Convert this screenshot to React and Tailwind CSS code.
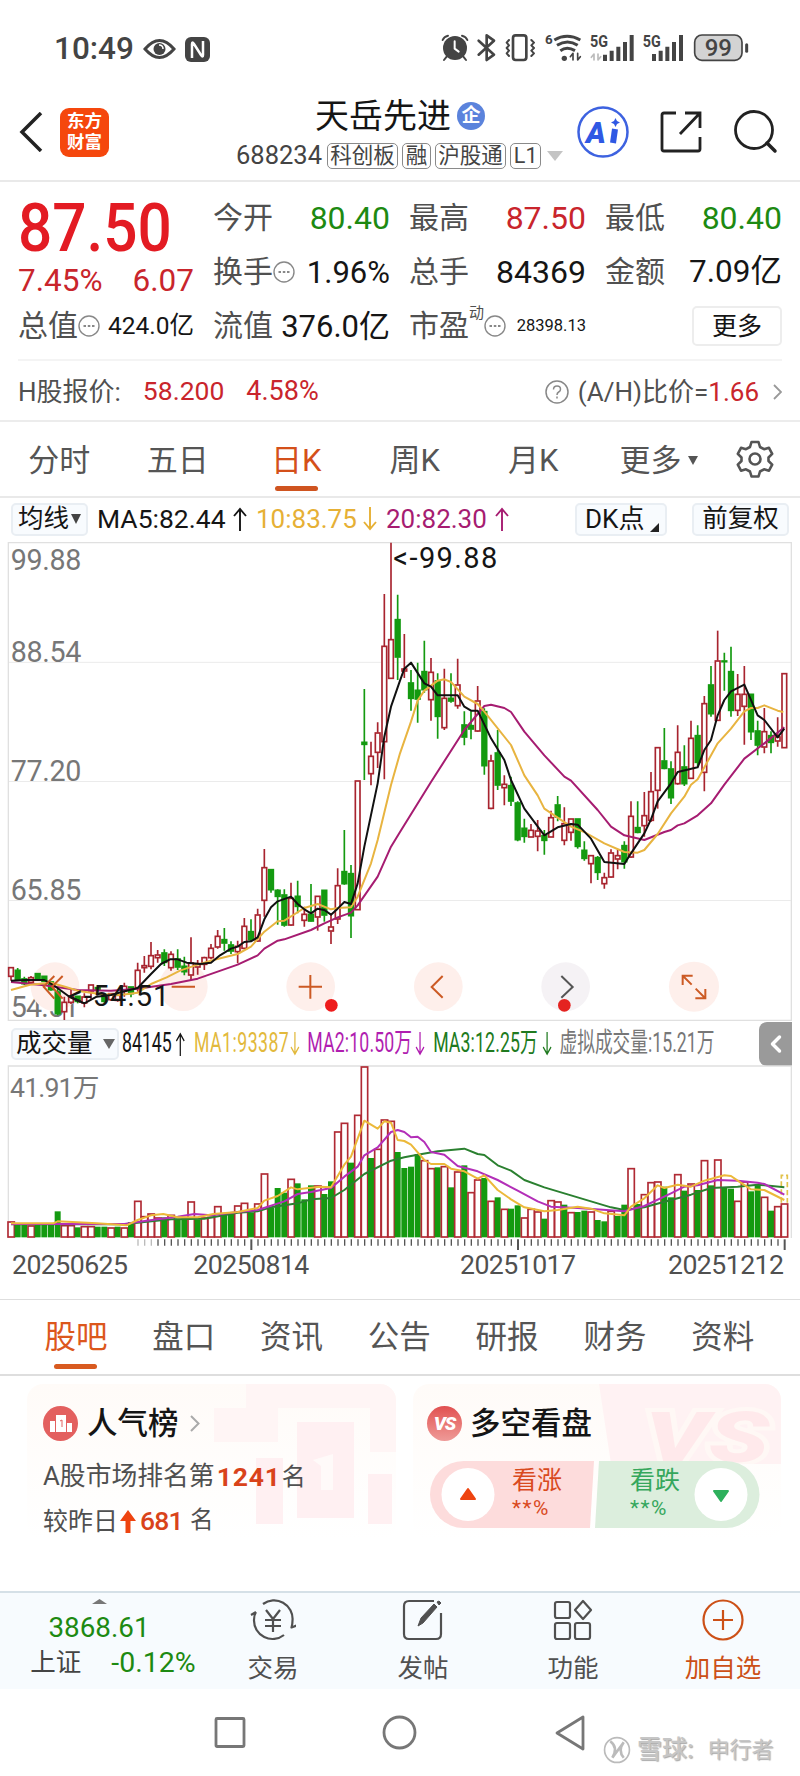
import { ChevronLeft } from 'lucide-react'

// [top wick, body top, body bottom, bottom wick, 1 = up / 0 = down]
const VELAS = [
  [1312, 1312, 1340, 1352, 1], [1314, 1320, 1350, 1352, 0], [1340, 1346, 1362, 1365, 0], [1338, 1342, 1358, 1360, 1],
  [1330, 1330, 1346, 1352, 0], [1338, 1338, 1355, 1355, 0], [1355, 1355, 1380, 1382, 0], [1375, 1385, 1452, 1456, 0],
  [1400, 1416, 1446, 1470, 1], [1380, 1398, 1418, 1422, 1], [1398, 1398, 1415, 1420, 0], [1390, 1400, 1420, 1432, 1],
  [1364, 1364, 1384, 1410, 1], [1365, 1372, 1380, 1390, 0], [1395, 1395, 1415, 1418, 0], [1390, 1390, 1410, 1412, 1],
  [1394, 1395, 1412, 1415, 1], [1358, 1368, 1385, 1400, 1], [1370, 1370, 1392, 1402, 0], [1298, 1320, 1374, 1385, 1],
  [1278, 1306, 1314, 1328, 1], [1236, 1276, 1310, 1318, 1], [1260, 1274, 1284, 1298, 1], [1258, 1268, 1298, 1308, 0],
  [1264, 1272, 1314, 1322, 1], [1258, 1286, 1312, 1320, 0], [1280, 1308, 1326, 1336, 0], [1222, 1298, 1336, 1350, 1],
  [1290, 1300, 1312, 1334, 1], [1280, 1282, 1304, 1320, 1], [1242, 1254, 1284, 1288, 1], [1200, 1218, 1252, 1256, 1],
  [1194, 1228, 1240, 1262, 0], [1234, 1244, 1264, 1272, 0], [1232, 1248, 1266, 1300, 1], [1164, 1188, 1256, 1258, 1],
  [1168, 1204, 1230, 1236, 0], [1136, 1154, 1234, 1236, 1], [957, 1012, 1112, 1160, 1], [1018, 1018, 1080, 1088, 0],
  [1078, 1080, 1100, 1184, 0], [1078, 1094, 1186, 1190, 0], [1058, 1104, 1186, 1188, 1], [1052, 1098, 1130, 1150, 0],
  [1130, 1152, 1172, 1190, 1], [1062, 1152, 1174, 1175, 0], [1098, 1098, 1162, 1202, 1], [1080, 1080, 1156, 1175, 0],
  [1150, 1190, 1204, 1242, 1], [1015, 1066, 1168, 1182, 1], [900, 1024, 1062, 1064, 0], [1005, 1030, 1158, 1224, 0],
  [752, 752, 1140, 1140, 1], [477, 636, 644, 750, 0], [635, 678, 732, 766, 1], [577, 608, 668, 714, 1],
  [192, 348, 636, 748, 1], [38, 328, 446, 446, 1], [194, 268, 382, 450, 0], [312, 416, 424, 444, 1],
  [420, 458, 506, 542, 0], [398, 480, 508, 578, 0], [332, 424, 480, 488, 0], [384, 426, 510, 572, 1],
  [430, 452, 560, 626, 0], [416, 504, 594, 600, 1], [430, 504, 514, 518, 0], [386, 464, 528, 536, 1],
  [544, 584, 622, 646, 0], [544, 586, 598, 628, 0], [468, 512, 604, 606, 1], [535, 544, 708, 734, 0],
  [674, 692, 836, 838, 1], [600, 668, 766, 780, 0], [736, 762, 774, 826, 1], [740, 766, 814, 828, 0],
  [814, 818, 930, 934, 0], [866, 894, 920, 938, 0], [882, 900, 922, 922, 1], [870, 902, 920, 964, 1],
  [900, 916, 932, 974, 0], [842, 862, 922, 922, 1], [798, 824, 862, 874, 0], [832, 880, 932, 946, 1],
  [866, 866, 908, 932, 1], [866, 866, 950, 956, 0], [934, 960, 986, 992, 0], [976, 976, 1002, 1060, 1],
  [978, 982, 1028, 1050, 0], [1028, 1042, 1062, 1076, 1], [958, 968, 1042, 1044, 1], [958, 976, 988, 1018, 1],
  [934, 946, 996, 1016, 0], [814, 858, 982, 984, 1], [814, 892, 908, 910, 0], [786, 856, 888, 920, 1],
  [726, 784, 872, 876, 1], [652, 652, 782, 836, 1], [594, 692, 716, 718, 0], [694, 716, 804, 822, 0],
  [586, 666, 762, 764, 1], [646, 710, 762, 768, 0], [572, 624, 746, 746, 1], [586, 616, 698, 708, 0],
  [498, 520, 728, 784, 1], [408, 464, 552, 560, 0], [302, 392, 572, 572, 1], [368, 392, 396, 482, 0],
  [350, 424, 542, 560, 0], [432, 492, 542, 558, 1], [408, 492, 530, 644, 1], [492, 492, 606, 630, 0],
  [572, 602, 646, 676, 0], [534, 604, 652, 670, 1], [604, 616, 638, 670, 0], [562, 620, 634, 650, 1],
  [430, 430, 654, 654, 1],
]

// bar tops, negative = down day
const VOLUMEN = [
  634, -640, -642, 646, -640, -642, -640, -604, 645, 645, -652, 648, 648, -650, -650, 652, -650, 652, -636, 572,
  618, 610, 622, -622, 614, -628, -625, 574, -628, 622, 620, 588, -612, -612, 586, 578, -608, 580, 490, -594,
  -534, -548, 506, -520, -568, -526, 526, -552, -514, 364, 338, -458, 314, 169, -444, 416, 328, 332, -426, -474,
  -470, -432, 450, 474, -472, 468, -532, 484, -466, 546, 508, -504, 572, -562, 596, -596, -586, 622, 596, 604,
  -626, 570, 574, -584, 606, -606, -602, 604, -630, -634, 602, -618, -584, 474, -582, 552, 516, 514, -530, -562,
  492, -542, 520, -540, 450, -526, 448, -532, -536, 572, 514, -544, -524, 560, -602, 588, 580,
]

const MA5 = '33,1352 80,1350 133,1350 160,1365 205,1398 253,1420 290,1400 333,1395 373,1384 413,1374 453,1332 483,1302 510,1288 533,1288 560,1298 600,1302 633,1298 660,1276 693,1256 713,1250 733,1236 753,1234 773,1222 793,1168 813,1132 833,1114 873,1100 893,1122 913,1138 933,1150 953,1136 973,1140 993,1154 1013,1136 1033,1116 1053,1122 1073,1060 1093,950 1133,760 1153,620 1173,530 1200,452 1213,416 1233,398 1273,460 1293,470 1313,496 1373,496 1393,530 1413,542 1433,542 1473,625 1513,690 1533,750 1573,836 1633,916 1673,892 1713,882 1733,884 1773,926 1813,996 1873,1002 1893,970 1933,910 1953,868 1973,814 2013,760 2033,726 2093,712 2113,660 2133,630 2153,556 2173,510 2193,484 2233,464 2273,556 2293,570 2333,622 2353,596'
const MA10 = '33,1380 90,1364 153,1358 200,1372 240,1384 300,1392 360,1395 413,1388 453,1362 500,1342 540,1322 593,1304 640,1290 713,1272 753,1250 793,1205 833,1174 853,1172 913,1134 953,1122 993,1138 1013,1134 1053,1132 1073,1100 1113,1000 1133,930 1173,765 1200,670 1233,575 1253,512 1273,482 1313,452 1333,448 1353,456 1393,500 1433,522 1453,545 1533,645 1573,736 1613,796 1633,836 1713,890 1753,906 1813,940 1873,966 1913,968 1933,960 1973,912 2013,850 2053,800 2073,764 2093,748 2153,640 2193,596 2233,544 2253,534 2273,534 2293,526 2333,542 2350,546'
const MA20 = '33,1356 133,1366 233,1380 333,1382 413,1376 513,1362 593,1346 713,1304 773,1276 793,1256 833,1232 853,1228 933,1200 973,1180 1013,1162 1053,1148 1073,1126 1133,1040 1173,950 1200,906 1293,756 1393,600 1453,528 1473,524 1513,534 1533,546 1573,605 1633,676 1693,740 1713,752 1793,840 1833,890 1873,916 1933,930 1993,906 2013,900 2033,886 2053,880 2093,856 2133,820 2173,764 2233,686 2293,640 2353,592'
const VMA1 = '33,640 160,640 173,634 290,640 380,646 413,630 453,616 490,612 533,622 593,622 640,612 713,606 773,594 793,572 833,558 873,532 893,538 960,530 993,532 1033,464 1053,440 1093,332 1133,356 1153,334 1173,338 1193,390 1213,393 1233,404 1273,450 1293,462 1333,462 1353,476 1393,484 1433,506 1453,496 1493,540 1533,568 1573,592 1633,604 1673,600 1733,590 1773,596 1813,610 1873,616 1893,590 1933,565 1973,526 1993,534 2033,524 2073,530 2113,512 2173,496 2193,498 2213,512 2253,538 2293,540 2353,570'
const VMA2 = '33,642 373,642 413,636 473,628 533,620 583,612 633,616 713,606 773,600 853,574 893,552 933,546 993,534 1033,500 1073,470 1093,436 1133,412 1173,366 1193,360 1213,366 1233,382 1253,380 1273,396 1293,426 1333,434 1373,468 1433,484 1493,510 1553,542 1613,574 1653,590 1733,594 1873,604 1933,588 2013,550 2053,530 2093,526 2153,510 2213,512 2273,518 2293,522 2353,554'
const VMA3 = '33,643 373,643 433,636 513,628 613,626 713,608 773,604 813,592 893,580 933,568 993,564 1033,540 1093,492 1173,452 1213,442 1253,434 1313,424 1393,416 1433,432 1453,435 1493,466 1533,482 1573,510 1633,532 1713,556 1793,580 1833,592 1873,600 1933,592 2013,570 2073,554 2133,534 2213,530 2273,524 2353,532'

const PERIODOS = ['分时', '五日', '日K', '周K', '月K']
const SECCIONES = ['股吧', '盘口', '资讯', '公告', '研报', '财务', '资料']

export default function App() {
  return (
    <div className="flex h-[1776px] w-[800px] flex-col overflow-hidden whitespace-nowrap bg-white font-['Roboto','Noto_Sans_CJK_SC',sans-serif] leading-none text-[#151515]">
      <BarraEstado />
      <Cabecera />
      <Cotizacion />
      <Periodos />
      <Medias />
      <GraficaPrecio />
      <CabeceraVolumen />
      <GraficaVolumen />
      <Secciones />
      <Tarjetas />
      <BarraInferior />
      <Navegacion />
    </div>
  )
}

function BarraEstado() {
  return (
    <div className="flex h-[84px] shrink-0 items-center pl-[54px] pt-[14px] text-[#444]">
      <span className="w-[89px] text-[31.5px] font-medium">10:49</span>
      <svg className="h-6 w-[33px]" viewBox="0 0 33 24" fill="none" stroke="currentColor" strokeWidth="3">
        <path d="M2 12Q16.500-5 31 12Q16.500 29 2 12Z" />
        <circle cx="16.500" cy="12" r="6" fill="currentColor" stroke="none" />
        <path d="M16 8q4 0 4 4" stroke="#fff" strokeWidth="1.500" />
      </svg>
      <svg className="ml-[9px] h-[25px] w-[25px]" viewBox="0 0 25 25">
        <rect width="25" height="25" rx="6" fill="currentColor" />
        <path d="M7 21V7q0-3 2 0L16 18q2 3 2 0V4" fill="none" stroke="#fff" strokeWidth="2.500" />
      </svg>
      <svg className="ml-[220px] h-[50px] w-[330px] shrink-0" viewBox="0 0 990 150" fill="none" stroke="currentColor" strokeWidth="8" strokeLinecap="round" strokeLinejoin="round">
        <circle cx="75" cy="72" r="36" fill="currentColor" stroke="none" />
        <path d="M38 48q4-10 16-13M112 48q-4-10-16-13M50 98l-8 10M100 98l8 10" strokeWidth="6" />
        <path d="M74 52v22l12 9" stroke="#fff" strokeWidth="6" />
        <path d="M146 50l46 42-22 16V34l22 16-46 42" />
        <rect x="249" y="34" width="40" height="74" rx="8" />
        <path d="M237 48l-7 8 7 8-7 8 7 8-7 8 7 8M304 48l8 8-8 8 8 8-8 8 8 8-8 8" strokeWidth="6" />
        <path d="M373 48q38-22 78 0M381 64q32-20 62 0M391 80q20-14 44 0" strokeWidth="9" strokeLinecap="butt" />
        <circle cx="403" cy="103" r="8" fill="currentColor" stroke="none" />
        <path d="M429 108V88l-8 10M443 88v20l8-10" strokeWidth="5" />
        <path d="M492 108V90l-8 10M504 90v18l8-10" stroke="#bbb" strokeWidth="5" />
        <g strokeWidth="12" strokeLinecap="butt">
          <path d="M525 111V92M545 111V80M565 111V68M585 111V54M605 111V33" />
          <path d="M672 111V90M692 111V80M712 111V68M732 111V54M753 111V33" />
        </g>
        <rect x="794" y="33" width="142" height="76" rx="22" fill="#d3d3d3" strokeWidth="5" />
        <path d="M950 62v20" strokeWidth="9" />
        <g fill="currentColor" stroke="none" fontWeight="700">
          <text x="345" y="60" fontSize="40">6</text>
          <text x="480" y="70" fontSize="48" textLength="54" lengthAdjust="spacingAndGlyphs">5G</text>
          <text x="638" y="70" fontSize="48" textLength="54" lengthAdjust="spacingAndGlyphs">5G</text>
          <text x="824" y="97" fontSize="72" fontWeight="500" textLength="82">99</text>
        </g>
      </svg>
    </div>
  )
}

function Etiqueta({ children }) {
  return (
    <span className="flex h-[26px] items-center rounded-[5px] border border-[#8a8a8a] px-[2.500px] text-[21.5px]">{children}</span>
  )
}

function Cabecera() {
  return (
    <div className="flex h-[98px] shrink-0 items-center border-b-2 border-[#e9e9e9] pl-[19px]">
      <svg className="h-[40px] w-[24px]" viewBox="0 0 24 40" fill="none" stroke="#222" strokeWidth="3.500">
        <path d="M22 1L3 20l19 19" />
      </svg>
      <div className="ml-[17px] flex h-[49px] w-[49px] flex-col items-center justify-center rounded-[9px] bg-[#f5470d] text-[17.500px] font-bold leading-[21px] text-white">
        <span className="h-[21px] overflow-hidden">东方</span>
        <span className="h-[21px] overflow-hidden">财富</span>
      </div>
      <div className="ml-[127px] flex w-[327px] flex-col pt-[3px]">
        <div className="flex items-center pl-[79px]">
          <span className="text-[34px] leading-[44px]">天岳先进</span>
          <span className="ml-[6px] flex h-[28px] w-[28px] items-center justify-center rounded-full bg-[#5b83dc] text-[19px] font-bold text-white">企</span>
        </div>
        <div className="flex h-[36px] items-center gap-[4px] text-[#444]">
          <span className="w-[87px] text-[25.5px]">688234</span>
          <Etiqueta>科创板</Etiqueta>
          <Etiqueta>融</Etiqueta>
          <Etiqueta>沪股通</Etiqueta>
          <Etiqueta>L1</Etiqueta>
          <svg className="ml-[2px] h-[10px] w-[16px]" viewBox="0 0 16 10"><path d="M0 0h16L8 10z" fill="#c4c4c4" /></svg>
        </div>
      </div>
      <svg className="ml-[14px] h-[52px] w-[52px]" viewBox="0 0 52 52" fill="none" stroke="#3d62e0">
        <circle cx="26" cy="26" r="24.500" strokeWidth="2.500" />
        <text x="9" y="37" fontSize="30" fontWeight="900" fontStyle="italic" fill="#2f58e4" stroke="none">A</text>
        <path d="M38 23l-2 14" stroke="#2f58e4" strokeWidth="6" />
        <path d="M38.500 12l1.500 3 3 1.500-3 1.500-1.500 3-1.500-3-3-1.500 3-1.500z" fill="#2f58e4" stroke="none" />
      </svg>
      <svg className="ml-[31px] h-[42px] w-[42px]" viewBox="0 0 42 42" fill="none" stroke="#222" strokeWidth="2.800">
        <path d="M16 2H4q-2 0-2 2v34q0 2 2 2h34q2 0 2-2V26M25 2h15v15M40 2L20 23" />
      </svg>
      <svg className="ml-[32px] h-[44px] w-[44px]" viewBox="0 0 44 44" fill="none" stroke="#222" strokeWidth="2.800" strokeLinecap="round">
        <circle cx="20" cy="20" r="18.500" />
        <path d="M33 33l8 8" strokeWidth="3.500" />
      </svg>
    </div>
  )
}

function Puntos() {
  return (
    <svg className="h-[22px] w-[22px] shrink-0" viewBox="0 0 22 22" fill="none" stroke="#888" strokeWidth="1.400">
      <circle cx="11" cy="11" r="10" />
      <path d="M5.500 11h2.500M9.800 11h2.500M14 11h2.500" strokeWidth="2.200" />
    </svg>
  )
}

function Dato({ label, icono, value, clase = 'text-[32px]' }) {
  return (
    <div className="flex h-[54px] items-center">
      <span className="text-[30px] text-[#505050]">{label}</span>
      {icono && <Puntos />}
      <span className={`ml-auto ${clase}`}>{value}</span>
    </div>
  )
}

function Cotizacion() {
  return (
    <div className="h-[240px] shrink-0 border-b-2 border-[#ececec] px-[18px] pt-[9px]">
      <div className="grid h-[170px] grid-cols-4 gap-x-[20px] border-b-2 border-[#f4f4f4]">
        <div>
          <div className="h-[72px] origin-left scale-x-[0.9] pt-[2px] text-[67px] font-medium leading-[70px] text-[#e31b23]">87.50</div>
          <div className="flex h-[36px] items-center justify-between text-[31.500px] text-[#c9252c]">
            <span>7.45%</span>
            <span>6.07</span>
          </div>
          <Dato label="总值" icono value="424.0亿" clase="text-[24.5px]" />
        </div>
        <div className="-ml-px">
          <Dato label="今开" value="80.40" clase="text-[32px]  text-[#1d8a12]" />
          <Dato label="换手" icono value="1.96%" clase="text-[31px]" />
          <Dato label="流值" value="376.0亿" clase="text-[31px]" />
        </div>
        <div className="-ml-px">
          <Dato label="最高" value="87.50" clase="text-[32px] text-[#c9252c]" />
          <Dato label="总手" value="84369" clase="text-[32px]" />
          <div className="flex h-[54px] items-center">
            <span className="text-[30px] text-[#505050]">市盈</span>
            <span className="-mt-[26px] text-[15px] text-[#505050]">动</span>
            <Puntos />
            <span className="ml-auto text-[16.500px]">28398.13</span>
          </div>
        </div>
        <div className="-ml-px">
          <Dato label="最低" value="80.40" clase="text-[32px] text-[#1d8a12]" />
          <Dato label="金额" value="7.09亿" clase="text-[31.5px]" />
          <div className="flex h-[54px] items-center justify-end">
            <span className="flex h-[40px] w-[90px] items-center justify-center rounded-[5px] border-2 border-[#ededed] text-[25px]">更多</span>
          </div>
        </div>
      </div>
      <div className="flex h-[61px] items-center">
        <span className="text-[26px] text-[#505050]">H股报价:</span>
        <span className="ml-[22px] text-[26.500px] text-[#c9252c]">58.200</span>
        <span className="ml-[22px] text-[27px] text-[#c9252c]">4.58%</span>
        <svg className="ml-auto h-[24px] w-[24px]" viewBox="0 0 24 24" fill="none" stroke="#888" strokeWidth="1.500">
          <circle cx="12" cy="12" r="11" />
          <path d="M8.500 9.500q0-3.500 3.500-3.500t3.500 3.200q0 1.800-1.800 2.800t-1.700 3M12 16.500v2" />
        </svg>
        <span className="ml-[9px] text-[26px] text-[#505050]">(A/H)比价=</span>
        <span className="text-[26px] text-[#c9252c]">1.66</span>
        <svg className="ml-[14px] h-[16px] w-[9px]" viewBox="0 0 9 16" fill="none" stroke="#999" strokeWidth="1.800"><path d="M1 1l7 7-7 7" /></svg>
      </div>
    </div>
  )
}

function Periodos() {
  return (
    <div className="flex h-[76px] shrink-0 border-b-2 border-[#e9e9e9] text-[31px] text-[#555]">
      {PERIODOS.map((p) => (
        <div key={p} className={`relative flex w-[118.500px] items-center justify-center pt-[2px] ${p === '日K' ? 'text-[#d4501a]' : ''}`}>
          {p}
          {p === '日K' && <i className="absolute bottom-[5px] h-[5px] w-[43px] rounded-full bg-[#cf5420]" />}
        </div>
      ))}
      <div className="flex items-center pl-[27px] pt-[2px]">
        更多
        <svg className="ml-[6px] h-[9px] w-[10px]" viewBox="0 0 10 9"><path d="M0 0h10L5 9z" fill="#555" /></svg>
      </div>
      <div className="flex items-center pl-[38px]">
        <svg className="h-[38px] w-[38px]" viewBox="0 0 38 38" fill="none" stroke="#555" strokeWidth="2.600" strokeLinejoin="round">
          <path d="M15.500 2h7l1.500 5 4 2.200 5-1.400 3.200 6-3.700 3.700v3.500l3.700 3.700-3.200 6-5-1.400-4 2.200-1.500 5h-7L14 31.500l-4-2.200-5 1.400-3.200-6L5.500 21v-3.500l-3.700-3.700 3.200-6 5 1.400L14 7z" />
          <circle cx="19" cy="19" r="5.500" />
        </svg>
      </div>
    </div>
  )
}

function Flecha({ abajo }) {
  return (
    <svg className={`h-[24px] w-[16px] shrink-0 ${abajo ? 'rotate-180' : ''}`} viewBox="0 0 16 24" fill="none" stroke="currentColor" strokeWidth="1.900">
      <path d="M8 24V2M2 9l6-7 6 7" />
    </svg>
  )
}

function Boton({ className, children }) {
  return <div className={`flex items-center rounded-[5px] border-2 border-[#e9eef3] bg-[#f8fbfe] ${className}`}>{children}</div>
}

function Medias() {
  return (
    <div className="flex h-[44px] shrink-0 items-center pb-[2px] pl-[11px] text-[26px]">
      <Boton className="h-[33px] w-[77px] pl-[5px]">
        <span className="text-[25.5px]">均线</span>
        <svg className="ml-[2px] h-[10px] w-[10px]" viewBox="0 0 10 10"><path d="M0 0h10L5 10z" fill="#444" /></svg>
      </Boton>
      <span className="ml-[9px] w-[135px] text-[26.500px]">MA5:82.44</span>
      <Flecha />
      <span className="ml-[8px] flex w-[106px] text-[#e6b035]">10:83.75</span>
      <span className="text-[#e6b035]"><Flecha abajo /></span>
      <span className="ml-[8px] w-[108px] text-[#a61c71]">20:82.30</span>
      <span className="text-[#a61c71]"><Flecha /></span>
      <Boton className="ml-[65px] h-[33px] w-[92px] pl-[8px]">
        <span className="text-[26px]">DK点</span>
        <svg className="ml-[6px] mt-[16px] h-[9px] w-[9px]" viewBox="0 0 9 9"><path d="M9 0v9H0z" fill="#222" /></svg>
      </Boton>
      <Boton className="ml-[25px] h-[33px] w-[97px] justify-center">
        <span className="text-[25.500px]">前复权</span>
      </Boton>
    </div>
  )
}

function GraficaPrecio() {
  return (
    <svg className="h-[480px] w-[800px] shrink-0 overflow-visible" viewBox="0 36 2400 1440" fill="none">
      <path d="M25 397H2374M25 754.500H2374M25 1111.500H2374" stroke="#ebebeb" strokeWidth="3" />
      <path d="M25 1471V38H2374V1471Z" stroke="#e0e0e0" strokeWidth="4" />
      <g fill="#777" fontSize="86">
        <text x="32" y="119" textLength="212">99.88</text>
        <text x="32" y="395" textLength="212">88.54</text>
        <text x="32" y="754" textLength="212">77.20</text>
        <text x="32" y="1111" textLength="212">65.85</text>
        <text x="32" y="1461" textLength="206">54.51</text>
      </g>
      <g fill="#feefeb">
        <circle cx="165" cy="1370" r="73" />
        <circle cx="550" cy="1370" r="73" />
        <circle cx="932" cy="1370" r="73" />
        <circle cx="1315" cy="1370" r="73" />
        <circle cx="1697" cy="1370" r="73" fill="#f5f2f5" />
        <circle cx="2082" cy="1370" r="75" />
      </g>
      {VELAS.map(([hi, top, bot, lo, up], i) => {
        const x = 33 + i * 20
        const color = up ? '#a8242f' : '#149a10'
        return (
          <g key={i} stroke={color} strokeWidth="5">
            <path d={`M${x} ${hi}V${top}M${x} ${bot}V${lo}`} />
            <rect x={x - 7} y={top + 1} width="14" height={Math.max(bot - top - 2, 2)} fill={up ? '#fff' : color} />
          </g>
        )
      })}
      <g strokeWidth="6" strokeLinejoin="round">
        <polyline points={MA20} stroke="#a61c71" />
        <polyline points={MA10} stroke="#e8b440" />
        <polyline points={MA5} stroke="#111" />
      </g>
      <g fill="#151515" fontSize="87">
        <text x="1180" y="115" textLength="312">&lt;-99.88</text>
        <text x="204" y="1429" textLength="304">&lt;-54.51</text>
      </g>
      <g stroke="#cc5a24" strokeWidth="6">
        <path d="M163 1338l-32 32 32 36M188 1338l-32 32 32 36M515 1370h70M896 1370h70M931 1335v71" />
        <path d="M1328 1338l-33 33 33 32" />
        <path d="M1684 1338l34 33-34 32" stroke="#555" />
        <path d="M2078 1337h-30v28M2049 1338l26 26M2086 1405h30v-28M2115 1404l-28-28" />
      </g>
      <circle cx="994" cy="1426" r="19" fill="#ee1c1c" />
      <circle cx="1693" cy="1426" r="19" fill="#e42320" />
    </svg>
  )
}

function CabeceraVolumen() {
  return (
    <div className="flex h-[43px] shrink-0 items-center pl-[11px]">
      <Boton className="h-[32px] w-[108px] shrink-0 pl-[3px]">
        <span className="text-[25.500px]">成交量</span>
        <svg className="ml-[10px] h-[10px] w-[12px]" viewBox="0 0 12 10"><path d="M0 0h12L6 10z" fill="#666" /></svg>
      </Boton>
      {/* condensed figures so the whole line fits */}
      <div className="ml-[3px] w-[637px] shrink-0">
        <div className="flex w-[940px] origin-left scale-x-[0.655] items-center text-[27px]">
          <span className="w-[81px]">84145</span>
          <Flecha />
          <span className="ml-[13px] flex w-[162px] items-center justify-between tracking-[0.7px] text-[#e2b93c]">MA1:93387<Flecha abajo /></span>
          <span className="ml-[11px] flex w-[180px] items-center justify-between tracking-[0.2px] text-[#b01eb0]">MA2:10.50万<Flecha abajo /></span>
          <span className="ml-[12px] flex w-[182px] items-center justify-between tracking-[0.2px] text-[#207a20]">MA3:12.25万<Flecha abajo /></span>
          <span className="ml-[11px] text-[27px] text-[#777]">虚拟成交量:15.21万</span>
        </div>
      </div>
      <div className="flex h-[44px] w-[33px] items-center justify-center rounded-l-[8px] bg-[#9a9a9a] text-white">
        <ChevronLeft size={28} strokeWidth={3} />
      </div>
    </div>
  )
}

function GraficaVolumen() {
  return (
    <svg className="h-[234px] w-[800px] shrink-0" viewBox="0 165 2400 702" fill="none">
      <path d="M25 684V168H2374V684" stroke="#e0e0e0" strokeWidth="4" />
      <text x="30" y="261" fill="#777" fontSize="80" textLength="268">41.91万</text>
      {VOLUMEN.map((v, i) => {
        const x = 33 + i * 20
        const y = Math.abs(v)
        return v < 0 ? (
          <rect key={i} x={x - 9} y={y} width="18" height={682 - y} fill="#149a10" />
        ) : (
          <rect key={i} x={x - 9} y={y + 2} width="19" height={679 - y} fill="#fff" stroke="#b02a34" strokeWidth="5" />
        )
      })}
      <path d="M2344 578V496H2362V578" stroke="#e2c24a" strokeWidth="5" strokeDasharray="16 8" />
      <g strokeWidth="6" strokeLinejoin="round">
        <polyline points={VMA3} stroke="#2b8030" />
        <polyline points={VMA2} stroke="#b32fb8" />
        <polyline points={VMA1} stroke="#ecb93a" />
      </g>
      {VELAS.map((_, i) => {
        if (i < 19) return null
        const mayor = i === 36 || i === 76 || i === 116
        return <path key={i} d={`M${34 + i * 20} 688V${mayor ? 720 : 707}`} stroke={i < 22 ? '#bbb' : '#555'} strokeWidth={mayor ? 6 : 4} />
      })}
      <g fill="#505050" fontSize="80">
        <text x="36" y="793" textLength="348">20250625</text>
        <text x="580" y="793" textLength="348">20250814</text>
        <text x="1380" y="793" textLength="348">20251017</text>
        <text x="2004" y="793" textLength="348">20251212</text>
      </g>
    </svg>
  )
}

function Secciones() {
  return (
    <div className="flex h-[77px] shrink-0 border-b-2 border-t border-[#dedede] px-[22px] text-[31.500px] text-[#555]">
      {SECCIONES.map((s, i) => (
        <div key={s} className={`relative flex w-[107.800px] items-center justify-center pt-[2px] ${i === 0 ? 'text-[#dc571c]' : ''}`}>
          {s}
          {i === 0 && <i className="absolute bottom-[5px] h-[5px] w-[43px] rounded-full bg-[#d85a20]" />}
        </div>
      ))}
    </div>
  )
}

function Tarjetas() {
  return (
    <div className="flex h-[215px] shrink-0 gap-[17px] pl-[27px] pt-[8px]">
      <div className="relative h-[156px] w-[369px] overflow-hidden rounded-[16px] bg-linear-to-b from-[#fffbf8] to-white pl-[16px]">
        <svg className="absolute right-0 top-0 h-[156px] w-[190px]" viewBox="0 0 190 156">
          <path d="M40 0h150v68h-26V24H72v34H8V24h32z" fill="#fff5f5" />
          <path d="M91 38h57v96H91zM50 74h27v66H50zM162 90h24v50h-24z" fill="#fff0f2" />
          <path d="M107 76l20-6v36h-12V82z" fill="#fffaf9" />
        </svg>
        <div className="relative flex h-[78px] items-center">
          <svg className="h-[35px] w-[35px]" viewBox="0 0 35 35">
            <circle cx="17.500" cy="17.500" r="17.500" fill="#e3605f" />
            <path d="M7 15h5v11H7zM13 9h10v17H13zM24 17h5v9h-5z" fill="#fff" />
            <path d="M17 15l2-1v7" stroke="#e3605f" fill="none" />
          </svg>
          <span className="ml-[9px] pt-[3px] text-[30.5px] font-medium">人气榜</span>
          <svg className="ml-[11px] h-[17px] w-[10px]" viewBox="0 0 10 17" fill="none" stroke="#aaa" strokeWidth="2"><path d="M1 1l7.500 7.500L1 16" /></svg>
        </div>
        <div className="relative flex h-[30px] items-center text-[25.800px] text-[#505050]">
          A股市场排名第
          <b className="ml-[2px] w-[65px] text-[26.500px] tracking-[0.800px] text-[#d9431a]">1241</b>
          <span className="text-[24px]">名</span>
        </div>
        <div className="relative mt-[14px] flex h-[30px] items-center text-[25px] text-[#505050]">
          较昨日
          <svg className="ml-[2px] h-[23px] w-[16px]" viewBox="0 0 16 23"><path d="M8 0l8 11h-5.500v12h-5V11H0z" fill="#ee4410" /></svg>
          <span className="ml-[4px] w-[50px] text-[26.5px] font-medium tracking-[-0.800px] text-[#d9431a]">681</span>
          <span className="text-[23.5px]">名</span>
        </div>
      </div>

      <div className="relative h-[156px] w-[368px] overflow-hidden rounded-[16px] bg-linear-to-b from-[#fffbf8] to-white pl-[14px]">
        <svg className="absolute right-0 top-0 h-[80px] w-[182px]" viewBox="0 0 182 80">
          <path d="M0 0h182v80H12z" fill="#fff2f3" />
          <text x="46" y="78" fontSize="70" fontWeight="900" fontStyle="italic" fill="#ffe9eb" stroke="#fff8f5" strokeWidth="8" paintOrder="stroke" textLength="124" lengthAdjust="spacingAndGlyphs">VS</text>
        </svg>
        <div className="relative flex h-[78px] items-center">
          <span className="flex h-[35px] w-[35px] items-center justify-center rounded-full bg-linear-to-b from-[#e04f50] to-[#ee9a98] text-[19px] font-black italic tracking-[-1px] text-white">VS</span>
          <span className="ml-[8px] pt-[3px] text-[30.5px] font-medium">多空看盘</span>
        </div>
        <div className="relative ml-[3px] -mt-px flex h-[67px] w-[330px]">
          <svg className="absolute h-[67px] w-[330px]" viewBox="0 0 330 67">
            <path d="M33.500 0H164l-4 67H33.500a33.500 33.500 0 010-67z" fill="#fddcdc" />
            <path d="M169 0h127a33.500 33.500 0 010 67H165z" fill="#dceedd" />
            <circle cx="38" cy="33.500" r="26.500" fill="#fff" />
            <circle cx="291" cy="33.500" r="26.500" fill="#fff" />
            <path d="M38 28l7 10H31z" fill="#ee4410" stroke="#ee4410" strokeWidth="2" strokeLinejoin="round" />
            <path d="M291 40l7-10h-14z" fill="#2eb05c" stroke="#2eb05c" strokeWidth="2" strokeLinejoin="round" />
          </svg>
          <div className="relative ml-[82px] flex w-[118px] flex-col pt-[6px] text-[#d94a1e]">
            <span className="text-[25px] leading-[27px]">看涨</span>
            <span className="text-[21px] leading-[28px] tracking-[1.500px]">**%</span>
          </div>
          <div className="relative flex flex-col pt-[6px] text-[#35a75c]">
            <span className="text-[25px] leading-[27px]">看跌</span>
            <span className="text-[21px] leading-[28px] tracking-[1.500px]">**%</span>
          </div>
        </div>
      </div>
    </div>
  )
}

function Accion({ label, className = 'text-[#505050]', children }) {
  return (
    <div className={`flex w-[150px] flex-col items-center pt-[6px] ${className}`}>
      <svg className="h-[42px] w-[46px]" viewBox="0 0 46 42" fill="none" stroke="currentColor" strokeWidth="2.200" strokeLinejoin="round">{children}</svg>
      <span className="mt-[15px] text-[25.500px]">{label}</span>
    </div>
  )
}

function BarraInferior() {
  return (
    <div className="flex h-[98px] shrink-0 border-t-2 border-[#d5e0e7] bg-[#f7fbfe]">
      <div className="flex w-[198px] flex-col items-center pt-[6px]">
        <svg className="h-[5px] w-[15px]" viewBox="0 0 15 5"><path d="M7.500 0L15 5H0z" fill="#777" /></svg>
        <span className="mt-[10px] text-[27.800px] text-[#1d8a12]">3868.61</span>
        <div className="mt-[7px] flex items-center gap-[30px] pl-[28px]">
          <span className="text-[25.500px] text-[#444]">上证</span>
          <span className="text-[28.500px] text-[#1d8a12]">-0.12%</span>
        </div>
      </div>
      <Accion label="交易">
        <path d="M13 5a18.500 18.500 0 0129.500 16.500q0 4-1 7l5-2M6 13l-5 3M6 13q-2 3-2 8a18.500 18.500 0 0030 15" />
        <path d="M16 11l7 9 7-9M23 20v13M15 21h16M15 27h16" />
      </Accion>
      <Accion label="发帖">
        <path d="M34 2H9Q4 2 4 7v28q0 5 5 5h27q5 0 5-5V14" />
        <path d="M18 27l3-8L34 5l3 3-14 16zM37 3l2-1 2 2-2 2z" fill="currentColor" strokeWidth="1" />
      </Accion>
      <Accion label="功能">
        <rect x="5" y="3" width="15" height="16" rx="2" />
        <rect x="5" y="24" width="15" height="16" rx="2" />
        <rect x="25" y="24" width="15" height="16" rx="2" />
        <path d="M33 2l8 9-8 9-8-9z" />
      </Accion>
      <Accion label="加自选" className="text-[#cc5017]">
        <circle cx="23" cy="21" r="19.500" />
        <path d="M23 11v20M13 21h20" />
      </Accion>
    </div>
  )
}

function Navegacion() {
  return (
    <div className="flex flex-1 items-center pl-[214px]">
      <svg className="h-[36px] w-[374px]" viewBox="0 0 374 36" fill="none" stroke="#777" strokeWidth="2.800" strokeLinejoin="round">
        <rect x="2" y="3.500" width="28" height="28" rx="1" />
        <circle cx="185.500" cy="17.500" r="15.500" />
        <path d="M369 2v32l-26-16z" />
      </svg>
      {/* author mark */}
      <div className="ml-[15px] mt-[34px] flex items-center text-[25px] font-medium text-[#c6c6c6] [text-shadow:1px_1px_1px_#aaa]">
        <svg className="h-[28px] w-[28px]" viewBox="0 0 27 27" fill="none" stroke="#bbb" strokeWidth="1.600">
          <circle cx="13.500" cy="13.500" r="12" />
          <path d="M7 5q8 6 2 16M9 21l11-15M20 6q-6 8 0 15" strokeWidth="2.500" />
        </svg>
        <span className="ml-[6px]">雪球:</span>
        <span className="ml-[14px] text-[22px] font-normal">申行者</span>
      </div>
    </div>
  )
}
